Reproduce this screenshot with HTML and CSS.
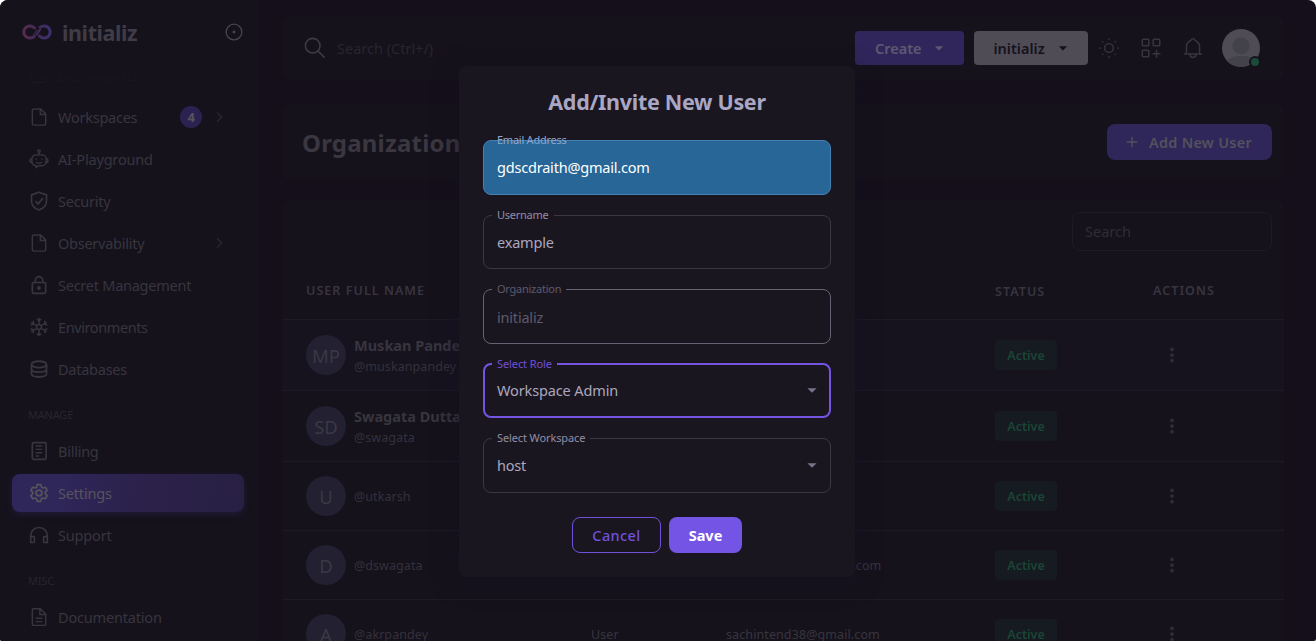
FILE: index.html
```html
<!DOCTYPE html>
<html lang="en">
<head>
<meta charset="utf-8">
<title>initializ</title>
<link rel="stylesheet" href="styles.css">
</head>
<body>
<svg class="defs" width="0" height="0">
  <defs>
    <symbol id="file" viewBox="0 0 24 24"><path d="M14 2.300H6a2 2 0 0 0-2 2v15.400a2 2 0 0 0 2 2h12a2 2 0 0 0 2-2V8.300zM13.600 2.500v6.500H20"/></symbol>
    <symbol id="chev" viewBox="0 0 24 24"><path d="M9 5l7 7-7 7"/></symbol>
    <symbol id="caret" viewBox="0 0 24 24"><path d="M7 10l5 5 5-5z"/></symbol>
    <symbol id="dots" viewBox="0 0 24 24"><circle cx="12" cy="4.500" r="2.500"/><circle cx="12" cy="12" r="2.500"/><circle cx="12" cy="19.500" r="2.500"/></symbol>
    <linearGradient id="lg" gradientUnits="userSpaceOnUse" x1="0" x2="30"><stop offset="0" stop-color="#582b4e"/><stop offset=".5" stop-color="#432b56"/><stop offset="1" stop-color="#3a3175"/></linearGradient>
  </defs>
</svg>
<div class="app">
  <aside class="sidebar">
    <div class="brand">
      <svg class="logo" viewBox="0 0 30 16"><g stroke="url(#lg)" stroke-width="3" fill="none"><path d="M12.800 12C11.500 13.500 9.700 14 7.800 14a6 6 0 0 1 0-12c2.500 0 4.200 1 5.500 3"/><path d="M17.200 4C18.500 2.500 20.300 2 22.200 2a6 6 0 0 1 0 12c-2.500 0-4.200-1-5.500-3"/></g><path d="M11.300 11.500l4-6M13 12.300l5-7.500M15 11l4-6" stroke="url(#lg)" stroke-width="1.200"/></svg>
      <span class="brand-name">initializ</span>
      <svg class="pin" viewBox="0 0 24 24"><circle cx="12" cy="12" r="10.500"/><circle cx="12" cy="12" r="1" class="solid"/></svg>
    </div>
    <nav class="menu">
      <a class="item faded"><svg viewBox="0 0 24 24"><rect x="3" y="4" width="18" height="17" rx="2"/><path d="M7 16h10"/></svg><span>Dashboards</span></a>
      <a class="item"><svg><use href="#file"/></svg><span>Workspaces</span><b class="badge">4</b><svg class="chev"><use href="#chev"/></svg></a>
      <a class="item"><svg viewBox="0 0 24 24"><circle cx="12" cy="2.500" r="1.500"/><path d="M12 4v3M8.500 7h7a5 5 0 0 1 5 5v3a5 5 0 0 1-5 5h-4l-3 2v-2a5 5 0 0 1-5-5v-3a5 5 0 0 1 5-5zM3.500 11.500c-3 0-3 5 0 5M20.500 11.500c3 0 3 5 0 5M8.500 15.500c2 2 5 2 7 0"/><path d="M8.500 11.500v1M15.500 11.500v1" stroke-width="2"/></svg><span class="t-ai">AI-Playground</span></a>
      <a class="item"><svg viewBox="0 0 24 24"><path d="M12 1.500l9 3.200v7.300c0 5-4 9-9 10.800C7 21 3 17 3 12V4.700zM7.500 12l3.300 3.500 6-7" stroke-width="2"/></svg><span>Security</span></a>
      <a class="item"><svg><use href="#file"/></svg><span>Observability</span><svg class="chev"><use href="#chev"/></svg></a>
      <a class="item"><svg viewBox="0 0 24 24"><rect x="4" y="9" width="16" height="13" rx="1.500" stroke-width="2"/><path d="M7.500 9V6.500a4.500 4.500 0 0 1 9 0V9" stroke-width="2"/><circle cx="12" cy="15.500" r="1.500" class="solid"/></svg><span>Secret Management</span></a>
      <a class="item"><svg viewBox="0 0 24 24"><circle cx="12" cy="12" r="3"/><path d="M12 1v8M12 15v8M2.500 6.500l7 4M14.500 13.500l7 4M21.500 6.500l-7 4M9.500 13.500l-7 4M9.500 2.500L12 5l2.500-2.500M9.500 21.500L12 19l2.500 2.500M2 10l3.500-1.500L5 4.500M22 14l-3.500 1.500.5 4M22 10l-3.500-1.500.5-4M2 14l3.500 1.500-.5 4"/></svg><span class="t-env">Environments</span></a>
      <a class="item"><svg viewBox="0 0 24 24"><g stroke-width="2.200"><ellipse cx="12" cy="6.500" rx="9" ry="3.800"/><path d="M3 6.500v11.300c0 5 18 5 18 0V6.500M3 12c0 5 18 5 18 0"/></g></svg><span>Databases</span></a>
      <div class="group">MANAGE</div>
      <a class="item"><svg viewBox="0 0 24 24"><rect x="4" y="2" width="16.500" height="20" rx="1.500" stroke-width="2"/><path d="M8 6h8M8 10h8M8 14h8M8 18h4"/></svg><span>Billing</span></a>
      <a class="item active"><svg viewBox="0 0 24 24"><path d="M9.800 2h4.400l.7 3 1.700 1 3-.9 2.200 3.800-2.200 2.100v2l2.200 2.100-2.200 3.800-3-.9-1.700 1-.7 3H9.800l-.7-3-1.700-1-3 .9-2.200-3.800L4.400 13v-2L2.200 8.900l2.200-3.800 3 .9 1.700-1z" stroke-width="2" stroke-linejoin="round"/><circle cx="12" cy="12" r="3.500" stroke-width="2"/></svg><span class="t-ai">Settings</span></a>
      <a class="item"><svg viewBox="0 0 24 24"><path d="M2 21V13a10 10 0 0 1 20 0v8M2 14h3.500a1 1 0 0 1 1 1v5a1 1 0 0 1-1 1H2zM22 14h-3.500a1 1 0 0 0-1 1v5a1 1 0 0 0 1 1H22z" stroke-width="2"/></svg><span class="t-ai">Support</span></a>
      <div class="group">MISC</div>
      <a class="item"><svg viewBox="0 0 24 24"><path d="M13.500 2H5a1 1 0 0 0-1 1v18a1 1 0 0 0 1 1h14a1 1 0 0 0 1-1V8.500zM13 2v7h7M8 13.500h8M8 17.500h8"/></svg><span class="t-ai">Documentation</span></a>
    </nav>
  </aside>
  <main class="main">
    <header class="card topbar">
      <svg class="search-icon" viewBox="0 0 24 24"><circle cx="9.500" cy="9.500" r="8"/><path d="M15.300 15.300L22.500 22.500"/></svg>
      <span class="hint">Search (Ctrl+/)</span>
      <div class="btn create"><span>Create</span><svg><use href="#caret"/></svg></div>
      <div class="btn org"><span>initializ</span><svg><use href="#caret"/></svg></div>
      <div class="tools">
        <svg viewBox="0 0 24 24"><circle cx="12" cy="12" r="5"/><path d="M12 1v1.500M12 21.500V23M1 12h1.500M21.500 12H23M4.300 4.300l1 1M18.700 18.700l1 1M4.300 19.700l1-1M18.700 5.300l1-1" stroke-width="2"/></svg>
        <svg viewBox="0 0 24 24"><rect x="2" y="2" width="7.500" height="7.500" rx="1"/><rect x="14.500" y="2" width="7.500" height="7.500" rx="1"/><rect x="2" y="14.500" width="7.500" height="7.500" rx="1"/><path d="M18.300 14v9M13.800 18.500h9"/></svg>
        <svg viewBox="0 0 24 24"><path d="M1.500 18.800h21M4.500 18.800V10.500C4.500 6.500 7 4.500 9.500 3.500c.8-2.700 4.200-2.700 5 0 2.500 1 5 3 5 7v8.300M8.500 19c.3 5 6.700 5 7 0"/></svg>
      </div>
      <div class="avatar"><svg viewBox="0 0 38 38"><clipPath id="round"><circle cx="19" cy="19" r="19"/></clipPath><g clip-path="url(#round)"><path d="M0 0h38v38H0z" fill="#4f4c56"/><circle cx="19" cy="17" r="8.500" fill="#43424b"/><path d="M4 33c4-5 8-6 15-6s11 1 15 6v5H4z" fill="#43424b"/></g></svg><i></i></div>
    </header>
    <section class="card title">
      <h1>Organization</h1>
      <div class="add"><svg viewBox="0 0 24 24"><path d="M12 4v16M4 12h16"/></svg><span>Add New User</span></div>
    </section>
    <section class="card table">
      <div class="filter"><div class="input">Search</div></div>
      <div class="row head"><span>USER FULL NAME</span><span></span><span></span><span class="h-status">STATUS</span><span>ACTIONS</span></div>
      <div class="row tall hover"><div class="who"><span class="circle">MP</span><div><b>Muskan Pandey</b><small>@muskanpandey</small></div></div><span></span><span></span><em>Active</em><svg><use href="#dots"/></svg></div>
      <div class="row tall"><div class="who"><span class="circle">SD</span><div><b>Swagata Dutta</b><small>@swagata</small></div></div><span></span><span></span><em>Active</em><svg><use href="#dots"/></svg></div>
      <div class="row"><div class="who"><span class="circle">U</span><small>@utkarsh</small></div><span></span><span></span><em>Active</em><svg><use href="#dots"/></svg></div>
      <div class="row"><div class="who"><span class="circle">D</span><small>@dswagata</small></div><span class="role">User</span><span class="mail">swagatadutta@gmail.com</span><em>Active</em><svg><use href="#dots"/></svg></div>
      <div class="row"><div class="who"><span class="circle">A</span><small>@akrpandey</small></div><span class="role">User</span><span class="mail">sachintend38@gmail.com</span><em>Active</em><svg><use href="#dots"/></svg></div>
    </section>
  </main>
</div>
<div class="overlay">
  <div class="modal">
    <h2>Add/Invite New User</h2>
    <div class="fields">
      <div class="field email"><label>Email Address</label><span>gdscdraith@gmail.com</span></div>
      <div class="field"><label>Username</label><span>example</span></div>
      <div class="field disabled"><label>Organization</label><span>initializ</span></div>
      <div class="field focus"><label>Select Role</label><span>Workspace Admin</span><svg><use href="#caret"/></svg></div>
      <div class="field"><label class="l-ws">Select Workspace</label><span>host</span><svg><use href="#caret"/></svg></div>
    </div>
    <div class="buttons"><div class="cancel">Cancel</div><div class="save">Save</div></div>
  </div>
</div>
</body>
</html>
```
FILE: styles.css
```css
* { box-sizing: border-box; }
html { background: #fff; }
body {
  margin: 0;
  height: 641px;
  overflow: hidden;
  font-family: "Noto Sans", "Open Sans", sans-serif;
  font-size: 14.5px;
  line-height: 20px;
  color: #38353f;
  background: #fff;
}
.defs { position: absolute; }
svg { display: block; fill: none; stroke: currentColor; stroke-width: 1.7; flex: none; }
.solid { fill: currentColor; }
span, b, small, h1, h2, label, em { white-space: nowrap; }
.app {
  display: flex;
  height: 641px;
  overflow: hidden;
  border-radius: 8px 8px 2px 2px;
  background: #140f1a;
}

/* Sidebar */
.sidebar { width: 258px; height: 641px; overflow: hidden; background: #15121c; }
.brand { display: flex; align-items: center; height: 56px; padding: 8px 15px 0 22px; }
.logo { width: 30px; height: 16px; stroke: none; }
.brand-name { margin-left: 10px; padding-top: 1px; font-size: 21.5px; font-weight: 700; line-height: 30px; letter-spacing: -0.4px; color: #3f3c47; }
.pin { width: 18px; height: 18px; margin-left: auto; stroke-width: 1.8; color: #47444e; }
.menu { display: flex; flex-direction: column; gap: 4px; padding: 0 14px 0 12px; }
.item { display: flex; align-items: center; height: 38px; padding: 0 16px; border-radius: 8px; letter-spacing: -0.25px; }
.item > svg { width: 22px; height: 22px; padding: 1px; margin-right: 8px; }
.t-ai { letter-spacing: -0.18px; }
.t-env { letter-spacing: -0.4px; }
.item .badge {
  width: 22px; height: 22px; margin-left: auto; margin-right: 8px;
  border-radius: 50%; background: #2c2252; color: #57545c;
  font-size: 13px; line-height: 22px; text-align: center;
}
.item .chev { width: 18px; height: 18px; margin: 0 0 0 auto; color: #2e2b35; }
.item .badge + .chev { margin-left: 0; }
.faded {
  color: #1c1922;
  -webkit-mask-image: linear-gradient(transparent 14px, #000 30px);
  mask-image: linear-gradient(transparent 14px, #000 30px);
}
.active {
  width: 232px; color: #57545c;
  background: linear-gradient(100deg, #2f265a 20%, #2b2149 60%, #282043);
  box-shadow: 0 2px 6px rgba(47, 38, 90, .5);
}
.group { height: 36px; padding: 15px 16px 0; font-size: 11px; line-height: 16px; letter-spacing: -0.2px; color: #28252f; }

/* Page content */
.main { width: 1058px; padding: 16px 32px 0 24px; }
.card { width: 1002px; border-radius: 8px; background: #15121c; }
.topbar { display: flex; align-items: center; height: 64px; padding: 0 24px 0 22px; }
.search-icon { width: 22px; height: 22px; color: #3e3b45; }
.hint { margin-left: 11px; color: #28252f; }
.btn { display: flex; align-items: center; height: 34px; border-radius: 4px; font-weight: 600; }
.btn svg, .field svg { fill: currentColor; stroke: none; }
.btn svg { width: 20px; height: 20px; }
.create { width: 109px; margin-left: auto; padding-left: 20px; gap: 7px; background: #30265b; color: #5e5970; }
.org { width: 114px; margin-left: 10px; padding-left: 19.500px; gap: 8.500px; background: #4f4c56; color: #15121c; }
.tools { display: flex; gap: 20px; margin-left: 10px; color: #38353f; }
.tools svg { width: 22px; height: 22px; padding: 0.5px; }
.avatar { position: relative; width: 38px; height: 38px; margin-left: 18px; }
.avatar svg { width: 38px; height: 38px; stroke: none; }
.avatar i { position: absolute; right: -1px; bottom: -1px; width: 12px; height: 12px; border: 2px solid #15121c; border-radius: 50%; background: #1b4a38; }
.title { display: flex; align-items: center; justify-content: space-between; height: 76px; margin-top: 24px; padding: 0 12px 0 20px; }
h1 { margin: 0; padding-top: 2px; font-size: 24px; line-height: 32px; font-weight: 700; letter-spacing: .2px; color: #3a3741; }
.add { display: flex; align-items: center; gap: 9px; width: 165px; height: 36px; padding-left: 17px; border-radius: 8px; background: #2f265a; color: #54515d; font-weight: 600; letter-spacing: .25px; }
.add svg { width: 16px; height: 16px; stroke-width: 2; }

/* User table */
.table { height: 460px; margin-top: 20px; }
.filter { display: flex; justify-content: flex-end; height: 62px; padding: 12px 12px 0; }
.input { width: 200px; height: 39px; padding: 8px 12px; border: 1px solid #1e1b27; border-radius: 8px; color: #302d37; }
.row {
  display: grid; grid-template-columns: 285px 135px 269px 158px auto; align-items: center;
  height: 69px; padding-left: 24px; border-bottom: 1px solid #1d1a26; font-size: 12.5px;
}
.head { height: 58px; font-weight: 600; letter-spacing: 1.05px; }
.h-status { padding-top: 2px; }
.tall { height: 71px; }
.hover { background: #16131f; }
.row > svg { width: 18px; height: 18px; margin: 0 0 1px 11px; fill: #302d37; stroke: none; }
.row > svg use { transform: translateX(-1px); }
.who { display: flex; align-items: center; gap: 8px; }
.who b { display: block; padding-top: 2px; font-size: 14.5px; line-height: 21px; }
.who small { display: block; font-size: 12.5px; line-height: 21px; letter-spacing: .07px; color: #34313b; }
.role, .mail { padding-top: 2px; letter-spacing: .1px; }
.circle { width: 40px; height: 40px; border-radius: 50%; background: #222031; color: #3b3845; font-size: 18.5px; line-height: 41px; text-align: center; }
.row em { width: 62px; height: 30px; border-radius: 4px; background: #161a21; color: #1b4635; font-style: normal; font-weight: 600; line-height: 31px; text-align: center; }

/* Invite dialog */
.overlay { position: absolute; top: 0; left: 0; width: 1316px; height: 641px; padding: 66px 0 0 459px; }
.modal { width: 396px; height: 511px; padding: 20px 24px 0; border-radius: 8px; background: #1a1620; box-shadow: 0 4px 24px rgba(20, 16, 34, .6); }
h2 { margin: 0; height: 32px; font-size: 21.5px; line-height: 32px; letter-spacing: -0.3px; text-align: center; color: #a9a7c3; }
.fields { display: flex; flex-direction: column; gap: 20px; margin-top: 22px; }
.field { position: relative; display: flex; align-items: center; justify-content: space-between; height: 54.5px; padding: 0 7px 0 13px; border: 1px solid #3b3745; border-radius: 8px; letter-spacing: -0.2px; color: #aaa7bf; }
.field label { position: absolute; left: 8px; top: -9px; padding: 0 5px; font-size: 11px; line-height: 16px; letter-spacing: -0.25px; background: #1a1620; color: #918ea6; }
.field .l-ws { letter-spacing: -0.12px; }
.field svg { width: 22px; height: 22px; color: #77738a; }
.email { background: #276696; border-color: #4681b2; color: #fff; }
.field.email label { background: none; color: #8fa6cf; }
.disabled { padding-top: 1px; border-color: #666271; color: #5e5a6a; }
.field.disabled label { color: #5e5a6a; }
.field.focus { height: 55.5px; margin-top: -1px; padding: 0 6px 1px 12px; border: 2px solid #7355e2; letter-spacing: -0.13px; }
.field.focus label { left: 7px; top: -9px; letter-spacing: -0.1px; color: #7050dc; }
.buttons { display: flex; justify-content: center; gap: 8px; margin-top: 24px; }
.cancel, .save { height: 36px; border-radius: 8px; text-align: center; font-weight: 500; letter-spacing: .4px; }
.cancel { width: 89px; border: 1px solid #7051dc; line-height: 35px; color: #7051dc; }
.save { width: 73px; line-height: 36px; background: #7454e4; color: #fff; font-weight: 700; letter-spacing: 0; }
```
